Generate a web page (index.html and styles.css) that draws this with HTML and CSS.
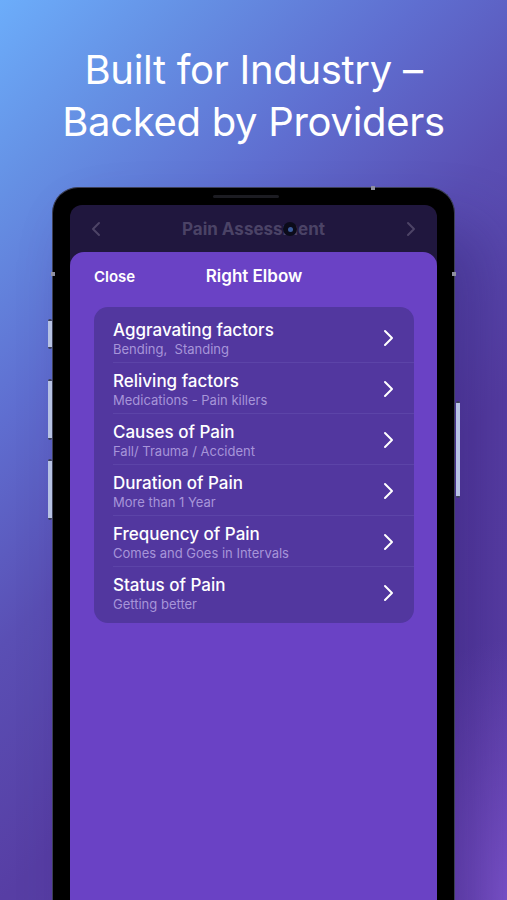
FILE: index.html
```html
<!DOCTYPE html>
<html lang="en">
<head>
<meta charset="utf-8">
<title>Pain Assessment</title>
<link rel="stylesheet" href="styles.css">
</head>
<body>
<div class="page">
  <h1 class="headline">Built for Industry –<br>Backed by Providers</h1>
  <div class="phone">
    <span class="btn btn-l1"></span>
    <span class="btn btn-l2"></span>
    <span class="btn btn-l3"></span>
    <span class="btn btn-r1"></span>
    <span class="dot dot-top"></span>
    <span class="dot dot-left"></span>
    <span class="dot dot-right"></span>
    <span class="speaker"></span>
    <div class="screen">
      <div class="topbar">
        <svg class="nav-chev" width="10" height="16" viewBox="0 0 10 16"><path d="M8 2 L2 8 L8 14" fill="none" stroke="#4d4466" stroke-width="2" stroke-linecap="round" stroke-linejoin="round"/></svg>
        <span class="topbar-title">Pain Assessment</span>
        <svg class="nav-chev" width="10" height="16" viewBox="0 0 10 16"><path d="M2 2 L8 8 L2 14" fill="none" stroke="#4d4466" stroke-width="2" stroke-linecap="round" stroke-linejoin="round"/></svg>
        <span class="camera"><span class="lens"></span></span>
      </div>
      <div class="sheet">
        <div class="sheet-head">
          <span class="close">Close</span>
          <span class="sheet-title">Right Elbow</span>
          <span></span>
        </div>
        <div class="card">
          <div class="row">
            <div class="row-text"><div class="row-title">Aggravating factors</div><div class="row-sub">Bending,&nbsp; Standing</div></div>
            <svg class="chev" width="11" height="18" viewBox="0 0 11 18"><path d="M2 2 L9 9 L2 16" fill="none" stroke="#fff" stroke-width="2" stroke-linecap="round" stroke-linejoin="round"/></svg>
          </div>
          <div class="row">
            <div class="row-text"><div class="row-title">Reliving factors</div><div class="row-sub">Medications - Pain killers</div></div>
            <svg class="chev" width="11" height="18" viewBox="0 0 11 18"><path d="M2 2 L9 9 L2 16" fill="none" stroke="#fff" stroke-width="2" stroke-linecap="round" stroke-linejoin="round"/></svg>
          </div>
          <div class="row">
            <div class="row-text"><div class="row-title">Causes of Pain</div><div class="row-sub">Fall/ Trauma / Accident</div></div>
            <svg class="chev" width="11" height="18" viewBox="0 0 11 18"><path d="M2 2 L9 9 L2 16" fill="none" stroke="#fff" stroke-width="2" stroke-linecap="round" stroke-linejoin="round"/></svg>
          </div>
          <div class="row">
            <div class="row-text"><div class="row-title">Duration of Pain</div><div class="row-sub">More than 1 Year</div></div>
            <svg class="chev" width="11" height="18" viewBox="0 0 11 18"><path d="M2 2 L9 9 L2 16" fill="none" stroke="#fff" stroke-width="2" stroke-linecap="round" stroke-linejoin="round"/></svg>
          </div>
          <div class="row">
            <div class="row-text"><div class="row-title">Frequency of Pain</div><div class="row-sub">Comes and Goes in Intervals</div></div>
            <svg class="chev" width="11" height="18" viewBox="0 0 11 18"><path d="M2 2 L9 9 L2 16" fill="none" stroke="#fff" stroke-width="2" stroke-linecap="round" stroke-linejoin="round"/></svg>
          </div>
          <div class="row">
            <div class="row-text"><div class="row-title">Status of Pain</div><div class="row-sub">Getting better</div></div>
            <svg class="chev" width="11" height="18" viewBox="0 0 11 18"><path d="M2 2 L9 9 L2 16" fill="none" stroke="#fff" stroke-width="2" stroke-linecap="round" stroke-linejoin="round"/></svg>
          </div>
        </div>
      </div>
    </div>
  </div>
</div>
</body>
</html>
```
FILE: styles.css
```css
* { box-sizing: border-box; }
html, body { margin: 0; padding: 0; }
body {
  width: 507px;
  height: 900px;
  overflow: hidden;
  font-family: Inter, "Noto Sans", sans-serif;
}
.page {
  width: 507px;
  height: 900px;
  overflow: hidden;
  background:
    radial-gradient(ellipse 160px 260px at 100% 100%, rgba(128, 86, 208, 0.9), rgba(128, 86, 208, 0) 100%),
    linear-gradient(135deg, #6cadfa 0%, #6590e4 14%, #5f6ed0 30%, #5a4fb4 46%, #573ea4 64%, #5a3da6 100%);
  padding-top: 44px;
}
.headline {
  margin: 0;
  text-align: center;
  color: #fff;
  font-weight: 400;
  font-size: 40px;
  line-height: 52px;
  letter-spacing: -0.3px;
}
.phone {
  position: relative;
  width: 403px;
  height: 760px;
  margin: 39px auto 0;
  background: #000;
  border: 1px solid #3c3f55;
  border-bottom: none;
  border-radius: 26px 26px 0 0;
  padding: 17px 17px 0;
  box-shadow: 30px 40px 60px rgba(40, 20, 100, 0.35);
}
.btn {
  position: absolute;
  width: 4px;
  background: #b7c2e4;
  border-top: 2px solid #3b3f5a;
  border-bottom: 2px solid #3b3f5a;
  border-radius: 2px;
}
.btn-l1 { left: -5px; top: 131px; height: 30px; }
.btn-l2 { left: -5px; top: 191px; height: 61px; }
.btn-l3 { left: -5px; top: 271px; height: 61px; }
.btn-r1 { right: -6px; top: 213px; height: 97px; }
.dot {
  position: absolute;
  width: 4px;
  height: 4px;
  background: #8f90a0;
}
.dot-top { top: -2px; left: 318px; }
.dot-left { top: 84px; left: -2px; }
.dot-right { top: 84px; right: -2px; }
.speaker {
  position: absolute;
  top: 7px;
  left: 160px;
  width: 66px;
  height: 3px;
  border-radius: 2px;
  background: #1c1c22;
}
.screen {
  height: 100%;
  background: #20173e;
  border-radius: 12px 12px 0 0;
  overflow: hidden;
}
.topbar {
  position: relative;
  height: 47px;
  display: flex;
  align-items: center;
  justify-content: space-between;
  padding: 0 21px;
}
.topbar-title {
  color: #4b4366;
  font-weight: 700;
  font-size: 17px;
}
.camera {
  position: absolute;
  left: 213px;
  top: 17px;
  width: 14px;
  height: 14px;
  border-radius: 50%;
  background: #0b0b1a;
  display: flex;
  align-items: center;
  justify-content: center;
}
.lens {
  width: 5px;
  height: 5px;
  border-radius: 50%;
  background: #3a5a9a;
}
.sheet {
  height: 100%;
  background: #6a42c5;
  border-radius: 14px 14px 0 0;
  padding: 0 23px 0 24px;
}
.sheet-head {
  height: 55px;
  display: grid;
  grid-template-columns: 1fr auto 1fr;
  align-items: center;
  padding-bottom: 7px;
}
.close {
  color: #fff;
  font-weight: 600;
  font-size: 15px;
}
.sheet-title {
  color: #fff;
  font-weight: 600;
  font-size: 17px;
}
.card {
  background: #52379f;
  border-radius: 14px;
  padding: 5px 0 6px 19px;
}
.row {
  height: 51px;
  display: flex;
  align-items: center;
  justify-content: space-between;
  padding-right: 20px;
  border-bottom: 1px solid #5c44a8;
}
.row:last-child { border-bottom: none; height: 50px; }
.row-text { display: flex; flex-direction: column; padding-top: 3px; }
.row-title {
  color: #fff;
  font-size: 17px;
  font-weight: 500;
  line-height: 20px;
}
.row-sub {
  color: #a795d9;
  font-size: 13px;
  line-height: 17px;
  margin-top: 1px;
}
.chev { display: block; margin-top: 2px; }
```
